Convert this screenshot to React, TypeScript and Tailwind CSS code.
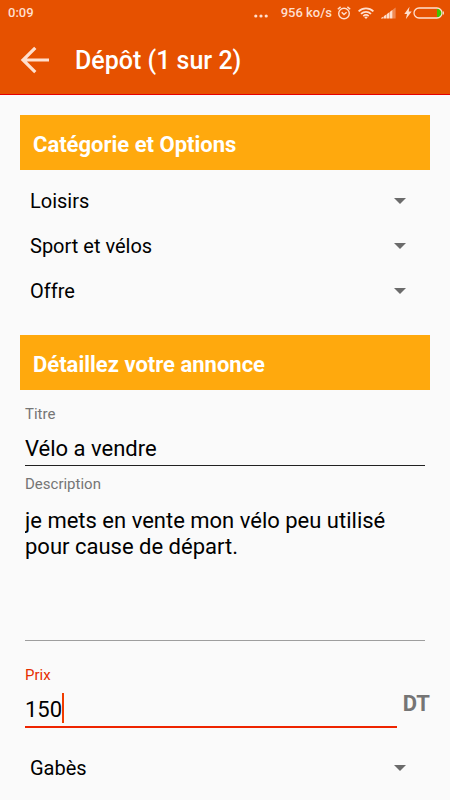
import React, { useState } from 'react';

interface SpinnerProps {
  label: string;
  value: string;
  options: string[];
  onChange: (value: string) => void;
}

export default function App() {
  const [category, setCategory] = useState('Loisirs');
  const [subCategory, setSubCategory] = useState('Sport et vélos');
  const [adType, setAdType] = useState('Offre');
  const [title, setTitle] = useState('Vélo a vendre');
  const [description, setDescription] = useState('je mets en vente mon vélo peu utilisé pour cause de départ.');
  const [price, setPrice] = useState('150');
  const [city, setCity] = useState('Gabès');

  return (
    <div className="min-h-screen bg-[#fafafa] font-[Roboto,sans-serif] text-black">
      <header className="border-b border-[#e60000] bg-[#e65100]">
        <StatusBar />
        <div className="flex h-17 items-center gap-[23px] px-5">
          <button type="button" aria-label="Retour" className="flex size-8 shrink-0 items-center">
            <svg viewBox="0 0 32 32" className="size-8" fill="none" stroke="#ffdfce" strokeWidth="3.2">
              <path d="M29 16H3M15.3 3.8L3 16l12.3 12.2" />
            </svg>
          </button>
          <h1 className="pt-0.5 text-[25px] leading-8 font-medium text-white">Dépôt (1 sur 2)</h1>
        </div>
      </header>

      <main className="px-5 pt-5 pb-2">
        <SectionTitle>Catégorie et Options</SectionTitle>
        <div className="pt-2 pb-[22px]">
          <Spinner label="Catégorie" value={category} options={['Loisirs', 'Véhicules', 'Immobilier']} onChange={setCategory} />
          <Spinner label="Sous-catégorie" value={subCategory} options={['Sport et vélos', 'Livres', 'Animaux']} onChange={setSubCategory} />
          <Spinner label="Type d'annonce" value={adType} options={['Offre', 'Demande']} onChange={setAdType} />
        </div>

        <SectionTitle>Détaillez votre annonce</SectionTitle>
        <div className="px-[5px] pt-3">
          <label htmlFor="title" className="block text-[15px] leading-6 text-[#757575]">Titre</label>
          <input
            id="title"
            value={title}
            onChange={e => setTitle(e.target.value)}
            className="mt-2 block h-8 w-full border-b border-[#212121] pb-0.5 text-[22px] leading-[26px] outline-none"
          />
          <label htmlFor="description" className="mt-1.5 block text-[15px] leading-6 text-[#757575]">Description</label>
          <textarea
            id="description"
            value={description}
            onChange={e => setDescription(e.target.value)}
            className="mt-2 block h-[137px] w-full resize-none border-b border-[#9e9e9e] pt-1 text-[22px] leading-[26px] outline-none"
          />
        </div>

        <div className="flex items-center gap-[6px] pt-[22px] pl-[5px]">
          <div className="min-w-0 flex-1">
            <label htmlFor="price" className="block text-[15px] leading-6 text-[#e62e00]">Prix</label>
            <div className="relative mt-1">
              <input
                id="price"
                inputMode="numeric"
                value={price}
                onChange={e => setPrice(e.target.value)}
                className="block h-[37px] w-full border-b-2 border-[#ee2400] pt-0.5 text-[22px] leading-[26px] caret-transparent outline-none"
              />
              <span className="absolute top-0.5 left-[37px] h-[30px] w-[2px] bg-[#f03c00]" />
            </div>
          </div>
          <span className="pt-4 text-[22px] leading-[26px] font-bold text-[#757575]">DT</span>
        </div>

        <div className="pt-[17px]">
          <Spinner label="Ville" value={city} options={['Gabès', 'Tunis', 'Sfax', 'Sousse']} onChange={setCity} />
        </div>
      </main>
    </div>
  );
}

const SectionTitle = ({ children }: { children: React.ReactNode }) => (
  <h2 className="bg-[#ffa90d] px-[13px] pt-4 pb-[11px] text-[22px] leading-7 font-bold text-white">{children}</h2>
);

const Spinner: React.FC<SpinnerProps> = ({ label, value, options, onChange }) => (
  <div className="relative">
    <select
      aria-label={label}
      value={value}
      onChange={e => onChange(e.target.value)}
      className="block h-[45px] w-full appearance-none bg-transparent pr-12 pl-[10px] text-[20px] leading-6 outline-none"
    >
      {options.map(o => <option key={o}>{o}</option>)}
    </select>
    <svg viewBox="0 0 12 6" className="pointer-events-none absolute inset-y-0 right-6 my-auto h-[6px] w-3 fill-[#6b6b6b]">
      <path d="M0 0h12L6 6z" />
    </svg>
  </div>
);

const StatusBar = () => (
  <div className="flex h-[26px] items-center justify-between pr-[6px] pl-2 text-[13px] leading-4 font-medium text-[#ffdfce]">
    <span>0:09</span>
    <div className="flex items-center">
      <svg viewBox="0 0 14 16" className="mr-[13px] h-4 w-[14px]" fill="currentColor">
        <circle cx="1.8" cy="11" r="1.6" />
        <circle cx="7" cy="11" r="1.6" />
        <circle cx="12.2" cy="11" r="1.6" />
      </svg>
      <span>956 ko/s</span>
      {/* alarm */}
      <svg viewBox="0 0 14 14" className="ml-[5px] size-[14px]" fill="none" stroke="currentColor" strokeWidth="1.4">
        <circle cx="7" cy="7.5" r="5.3" />
        <path d="M4.7 6.3L7 8.5l2.6-2.2M.8 3.3L3.6.9M13.2 3.3L10.4.9" />
      </svg>
      {/* wifi */}
      <svg viewBox="0 0 16 12" className="ml-[7px] h-3 w-4" fill="none" stroke="currentColor" strokeWidth="1.8">
        <path d="M.6 4.3c4.2-4 10.6-4 14.8 0M3 6.8c2.9-2.7 7.1-2.7 10 0M5.3 9.1c1.6-1.4 3.8-1.4 5.4 0" />
        <path d="M6.3 10.2c1-.8 2.4-.8 3.4 0L8 12z" fill="currentColor" stroke="none" />
      </svg>
      {/* signal */}
      <svg viewBox="0 0 15 12" className="ml-[7px] h-3 w-[15px]" fill="currentColor">
        <path d="M0 11.5V11l2.6-1.6v2.1zM3 11.5V9l2.6-1.8v4.3zM6 11.5V6.9L8.6 5v6.5zM9 11.5V4.7l2.6-1.9v8.7z" />
        <path d="M12 11.5v-9L14.6.6v10.9z" opacity=".4" />
      </svg>
      {/* charging battery */}
      <svg viewBox="0 0 8 14" className="ml-2 h-[14px] w-2" fill="currentColor">
        <path d="M5.5.8L.3 7.9H3l-1.200 5.300 5.900-7.700h-3z" />
      </svg>
      <svg viewBox="0 0 31 12" className="ml-px h-3 w-[31px]" fill="none">
        <path d="M24 1.5h1a4.500 4.500 0 010 9h-1z" fill="#3fc400" />
        <rect x="1" y="1" width="28" height="10" rx="5" stroke="currentColor" strokeWidth="1.3" />
        <path d="M30.4 4.5v3" stroke="currentColor" />
      </svg>
    </div>
  </div>
);
